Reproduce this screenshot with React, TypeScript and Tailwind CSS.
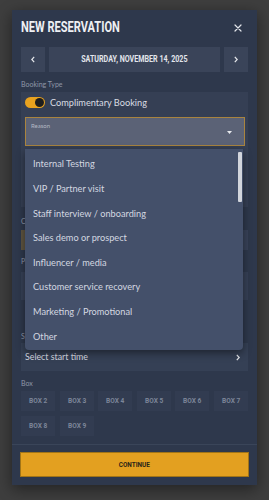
import React from "react";

const items = [
  "Internal Testing",
  "VIP / Partner visit",
  "Staff interview / onboarding",
  "Sales demo or prospect",
  "Influencer / media",
  "Customer service recovery",
  "Marketing / Promotional",
  "Other",
];

const boxes = ["BOX 2", "BOX 3", "BOX 4", "BOX 5", "BOX 6", "BOX 7", "BOX 8", "BOX 9"];

export default function App() {
  return (
    <div className="h-[500px] w-full bg-[#3e3e3e] pt-[10px] px-[12px] font-['Lato',sans-serif]">
      <div className="relative h-[475px] w-[245px] bg-[#2e384c] shadow-[0_4px_14px_rgba(0,0,0,0.45)] flex flex-col">
        <div className="flex-1 overflow-hidden px-[9px] pt-[7px]">
          {/* Header */}
          <div className="flex h-[20px] items-center justify-between">
            <h1 className="inline-block origin-left scale-x-[0.79] whitespace-nowrap font-['Roboto',sans-serif] text-[14px] font-bold leading-[20px] text-[#eef0f4]">
              NEW RESERVATION
            </h1>
            <svg width="8" height="8" viewBox="0 0 8 8" className="mr-[6px] mt-[1px]">
              <path d="M1 1L7 7M7 1L1 7" stroke="#e2e5ea" strokeWidth="1.2" strokeLinecap="round" />
            </svg>
          </div>

          {/* Date nav */}
          <div className="mt-[10px] flex h-[25px] gap-[4px]">
            <div className="flex w-[24px] items-center justify-center bg-[#3a4459]">
              <svg width="4" height="7" viewBox="0 0 4 7">
                <path d="M3.2 0.8L0.8 3.5L3.2 6.2" stroke="#e6e8ec" strokeWidth="1.2" fill="none" />
              </svg>
            </div>
            <div className="flex flex-1 items-center justify-center bg-[#3a4459]">
              <span className="inline-block scale-x-[0.84] whitespace-nowrap font-['Roboto',sans-serif] text-[8.5px] font-bold text-[#e3e6ec]">
                SATURDAY, NOVEMBER 14, 2025
              </span>
            </div>
            <div className="flex w-[24px] items-center justify-center bg-[#3a4459]">
              <svg width="4" height="7" viewBox="0 0 4 7">
                <path d="M0.8 0.8L3.2 3.5L0.8 6.2" stroke="#e6e8ec" strokeWidth="1.2" fill="none" />
              </svg>
            </div>
          </div>

          {/* Booking type */}
          <div className="mt-[6px] h-[13px] text-[7px] leading-[13px] text-[#8f97a8]">Booking Type</div>
          <div className="mt-[1px] h-[115px] bg-[#353f54] pl-[4px] pr-[3px] pt-[5px]">
            <div className="flex h-[11px] items-center gap-[5px]">
              <div className="flex h-[11px] w-[20px] items-center justify-end rounded-full bg-[#e8a21f] pr-[1px]">
                <div className="h-[9px] w-[9px] rounded-full bg-[#1e1e1e]" />
              </div>
              <span className="text-[9.2px] text-[#d9dce3]">Complimentary Booking</span>
            </div>
            <div className="relative mt-[9px] h-[29px] border border-[#a9843f] bg-[#5b6276]">
              <span className="absolute left-[5px] top-[4px] text-[6px] leading-[8px] text-[#b4b9c4]">Reason</span>
              <svg width="5" height="3" viewBox="0 0 5 3" className="absolute right-[12px] top-[13px]">
                <path d="M0 0H5L2.5 3Z" fill="#e8eaee" />
              </svg>
            </div>
          </div>

          {/* Fields behind menu */}
          <div className="mt-[8px] h-[13px] text-[7px] leading-[13px] text-[#8f97a8]">C</div>
          <div className="mt-[2px] flex h-[20px] gap-[4px]">
            <div className="w-[34px] bg-[#5e5440]" />
            <div className="flex-1" />
            <div className="w-[34px] bg-[#384258]" />
          </div>
          <div className="mt-[5px] h-[13px] text-[7px] leading-[13px] text-[#8f97a8]">P</div>
          <div className="mt-[4px] h-[28px] bg-[#364056]" />

          <div className="mt-[30px] h-[13px] text-[7px] leading-[13px] text-[#8f97a8]">S</div>
          <div className="flex h-[28px] items-center justify-between bg-[#354055] pl-[4px] pr-[8px]">
            <span className="text-[8.8px] text-[#d9dce3]">Select start time</span>
            <svg width="4" height="7" viewBox="0 0 4 7">
              <path d="M0.8 0.8L3.2 3.5L0.8 6.2" stroke="#e6e8ec" strokeWidth="1.2" fill="none" />
            </svg>
          </div>

          <div className="mt-[6px] h-[13px] text-[7px] leading-[13px] text-[#8f97a8]">Box</div>
          <div className="mt-[1px] grid grid-cols-6 gap-x-[4.3px] gap-y-[5px]">
            {boxes.map((b) => (
              <div key={b} className="flex h-[20px] items-center justify-center bg-[#323c51]">
                <span className="inline-block scale-x-[0.82] whitespace-nowrap font-['Roboto',sans-serif] text-[8px] font-bold text-[#7d8699]">
                  {b}
                </span>
              </div>
            ))}
          </div>
        </div>

        {/* Footer */}
        <div className="border-t border-[#3a4559] px-[8px] pb-[8px] pt-[7px]">
          <div className="flex h-[25px] items-center justify-center border border-[#a27416] bg-[#e3a020]">
            <span className="inline-block scale-x-[0.85] font-['Roboto',sans-serif] text-[7.5px] font-bold text-[#2a2418]">
              CONTINUE
            </span>
          </div>
        </div>

        {/* Dropdown menu */}
        <div className="absolute left-[13px] top-[139px] z-10 h-[201px] w-[218px] rounded-b-[4px] bg-[#44506a] pt-[3px] shadow-[0_3px_8px_rgba(0,0,0,0.45)]">
          {items.map((it) => (
            <div key={it} className="flex h-[24.6px] items-center pl-[8px] text-[9.2px] text-[#d3d7e0]">
              {it}
            </div>
          ))}
          <div className="absolute left-[213px] top-[3px] h-[50px] w-[3.5px] rounded-[1px] bg-[#d2d5dc]" />
        </div>
      </div>
    </div>
  );
}
